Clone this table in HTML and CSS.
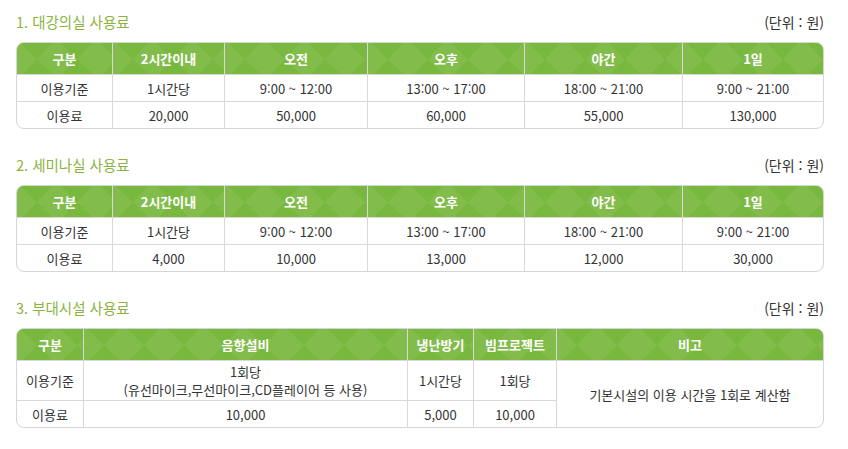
FILE: index.html
```html
<!DOCTYPE html>
<html lang="ko">
<head>
<meta charset="utf-8">
<link rel="stylesheet" href="styles.css">
</head>
<body>
<div class="page">
  <section class="sec">
    <div class="sec-head"><h2 class="sec-title">1. 대강의실 사용료</h2><span class="unit">(단위 : 원)</span></div>
    <div class="tbl-wrap">
      <table class="tbl t1">
        <colgroup><col class="c1"><col class="c2"><col class="c3"><col class="c4"><col class="c5"><col></colgroup>
        <thead><tr><th>구분</th><th>2시간이내</th><th>오전</th><th>오후</th><th>야간</th><th>1일</th></tr></thead>
        <tbody>
          <tr><td>이용기준</td><td>1시간당</td><td>9:00 ~ 12:00</td><td>13:00 ~ 17:00</td><td>18:00 ~ 21:00</td><td>9:00 ~ 21:00</td></tr>
          <tr><td>이용료</td><td>20,000</td><td>50,000</td><td>60,000</td><td>55,000</td><td>130,000</td></tr>
        </tbody>
      </table>
    </div>
  </section>
  <section class="sec">
    <div class="sec-head"><h2 class="sec-title">2. 세미나실 사용료</h2><span class="unit">(단위 : 원)</span></div>
    <div class="tbl-wrap">
      <table class="tbl t1">
        <colgroup><col class="c1"><col class="c2"><col class="c3"><col class="c4"><col class="c5"><col></colgroup>
        <thead><tr><th>구분</th><th>2시간이내</th><th>오전</th><th>오후</th><th>야간</th><th>1일</th></tr></thead>
        <tbody>
          <tr><td>이용기준</td><td>1시간당</td><td>9:00 ~ 12:00</td><td>13:00 ~ 17:00</td><td>18:00 ~ 21:00</td><td>9:00 ~ 21:00</td></tr>
          <tr><td>이용료</td><td>4,000</td><td>10,000</td><td>13,000</td><td>12,000</td><td>30,000</td></tr>
        </tbody>
      </table>
    </div>
  </section>
  <section class="sec">
    <div class="sec-head"><h2 class="sec-title">3. 부대시설 사용료</h2><span class="unit">(단위 : 원)</span></div>
    <div class="tbl-wrap">
      <table class="tbl t3">
        <colgroup><col class="d1"><col class="d2"><col class="d3"><col class="d4"><col></colgroup>
        <thead><tr><th>구분</th><th>음향설비</th><th>냉난방기</th><th>빔프로젝트</th><th>비고</th></tr></thead>
        <tbody>
          <tr class="tall"><td>이용기준</td><td><span class="ln">1회당</span><span class="ln">(유선마이크,무선마이크,CD플레이어 등 사용)</span></td><td>1시간당</td><td>1회당</td><td rowspan="2">기본시설의 이용 시간을 1회로 계산함</td></tr>
          <tr><td>이용료</td><td>10,000</td><td>5,000</td><td>10,000</td></tr>
        </tbody>
      </table>
    </div>
  </section>
</div>
</body>
</html>
```
FILE: styles.css
```css
* { box-sizing: border-box; }
html, body { margin: 0; padding: 0; background: #fff; }
body {
  font-family: "Noto Sans CJK KR", "Noto Sans", sans-serif;
  color: #333;
  font-size: 13px;
}
.page { padding: 12px 24px 0 16px; width: 848px; }
.sec { margin-bottom: 26px; }
.sec-head {
  display: flex;
  justify-content: space-between;
  align-items: center;
  height: 20px;
  margin-bottom: 10px;
}
.sec-title {
  margin: 0;
  font-size: 14.5px;
  font-weight: 400;
  color: #8ab33f;
  line-height: 20px;
}
.unit { font-size: 14px; color: #333; line-height: 20px; }
.tbl-wrap {
  border: 1px solid #d6d6d6;
  border-radius: 8px;
  overflow: hidden;
}
.tbl {
  width: 100%;
  border-collapse: separate;
  border-spacing: 0;
  table-layout: fixed;
}
.tbl th {
  height: 31px;
  color: #fff;
  font-weight: 700;
  font-size: 13px;
  line-height: 16px;
  padding: 0;
  background-color: #79b83f;
  background-image: repeating-conic-gradient(from 45deg, #82bd4b 0 25%, #79b83f 0 50%);
  background-size: 40px 40px;
  background-position: 0 -4px;
  border-left: 1px solid #d8d8d8;
}
.tbl td {
  height: 27px;
  padding: 0;
  text-align: center;
  line-height: 17px;
  border-left: 1px solid #d8d8d8;
  border-top: 1px solid #d8d8d8;
}
.tbl th:first-child, .tbl tr > td:first-child { border-left: 0; }
.tbl td[rowspan] { border-left: 1px solid #d8d8d8; }
.tbl tr.tall td { height: 40px; }
.ln { display: block; line-height: 18px; }
.t1 .c1 { width: 95px; }
.t1 .c2 { width: 112px; }
.t1 .c3 { width: 143px; }
.t1 .c4 { width: 157px; }
.t1 .c5 { width: 158px; }
.t3 .d1 { width: 66px; }
.t3 .d2 { width: 324px; }
.t3 .d3 { width: 66px; }
.t3 .d4 { width: 83px; }
```
